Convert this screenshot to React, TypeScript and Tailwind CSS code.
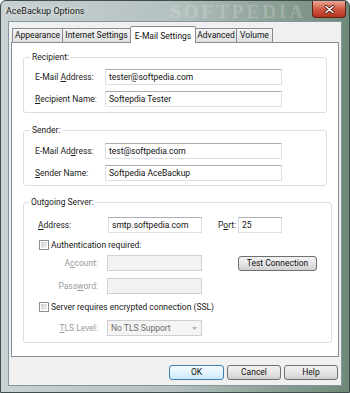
import React from 'react';

const font = "font-['Segoe_UI','Roboto',sans-serif]";

function Tab({ label, className, active }: { label: string; className: string; active?: boolean }) {
  if (active) {
    return (
      <div
        className={`relative z-10 -mb-px h-[17px] flex items-start justify-center pt-[3px] bg-white border border-b-0 border-[#898c95] rounded-t-[2px] text-[#111] ${className}`}
      >
        {label}
      </div>
    );
  }
  return (
    <div
      className={`h-[14px] flex items-center justify-center bg-gradient-to-b from-[#f4f4f4] to-[#e1e1e1] border-t border-[#898c95] text-[#111] ${className}`}
    >
      {label}
    </div>
  );
}

function TextBox({ value, className, disabled }: { value?: string; className: string; disabled?: boolean }) {
  return (
    <div
      className={
        disabled
          ? `h-[16px] border border-[#d2d2d2] bg-[#f2f2f2] ${className}`
          : `h-[16px] flex items-center pl-[3px] border border-[#dbdfe6] border-t-[#abadb3] bg-white text-[#111] ${className}`
      }
    >
      {value}
    </div>
  );
}

function CheckBox() {
  return (
    <div className="w-[10px] h-[10px] border border-[#8f8f8f] bg-white p-px">
      <div className="w-full h-full bg-gradient-to-br from-[#cfcfcf] to-[#f4f4f4]" />
    </div>
  );
}

function Button({ children, className, primary }: { children: React.ReactNode; className: string; primary?: boolean }) {
  return (
    <div
      className={
        primary
          ? `h-[15px] flex items-center justify-center rounded-[3px] border border-[#3c7fb1] bg-gradient-to-b from-[#f3fafe] via-[#e3f3fc] to-[#c9e8fa] text-[#111] ${className}`
          : `h-[15px] flex items-center justify-center rounded-[3px] border border-[#707070] bg-gradient-to-b from-[#f2f2f2] via-[#e6e6e6] to-[#d0d0d0] text-[#111] ${className}`
      }
    >
      {children}
    </div>
  );
}

function Row({ label, value }: { label: React.ReactNode; value: string }) {
  return (
    <div className="flex items-center h-[16px]">
      <div className="w-[70px] text-[#1a1a1a]">{label}</div>
      <TextBox value={value} className="w-[177px]" />
    </div>
  );
}

function Group({
  title,
  className,
  legendClass,
  children,
}: {
  title: string;
  className: string;
  legendClass: string;
  children: React.ReactNode;
}) {
  return (
    <fieldset className={`border border-[#d5dfe5] rounded-[3px] ${className}`}>
      <legend className={`px-[2px] h-[12px] leading-[12px] text-[#1a1a1a] ${legendClass}`}>{title}</legend>
      {children}
    </fieldset>
  );
}

export default function App() {
  return (
    <div
      className={`w-[350px] h-[393px] flex flex-col overflow-hidden rounded-t-[6px] border border-[#3f4d4c] bg-gradient-to-r from-[#c9d1d2] via-[#b4c1bf] to-[#6f8878] text-[8.5px] ${font}`}
    >
      {/* title bar */}
      <div className="h-[20px] flex items-start">
        <div className="pl-[5px] pt-[4px] text-[9px] text-[#1b1b1b] [text-shadow:0_0_5px_#fff]">AceBackup Options</div>
        <div className="ml-auto mr-[6px] pt-px text-[19px] leading-[19px] font-bold tracking-[3px] text-[#ffffff]/20 font-['Liberation_Serif',serif]">
          SOFTPEDIA
        </div>
        <div className="mr-[3px] w-[34px] h-[17px] flex items-center justify-center rounded-b-[4px] border border-t-0 border-[#5b231a] bg-gradient-to-b from-[#eaa796] via-[#cf5a43] to-[#b7301b]">
          <svg width="11" height="9" viewBox="0 0 11 9">
            <path d="M2 1.5 L9 7.5 M9 1.5 L2 7.5" stroke="#4a1a12" strokeWidth="3" strokeLinecap="round" />
            <path d="M2 1.5 L9 7.5 M9 1.5 L2 7.5" stroke="#fff" strokeWidth="1.6" strokeLinecap="round" />
          </svg>
        </div>
      </div>

      {/* client area */}
      <div className="mx-[7px] mb-[6px] flex-1 flex flex-col border border-[#8795a0] bg-[#f0f0f0] pt-[4px] px-[2px] pb-[5px]">
        <div className="h-[16px] flex items-end">
          <Tab label="Appearance" className="ml-px w-[51px] border-l border-r" />
          <Tab label="Internet Settings" className="w-[67px]" />
          <Tab label="E-Mail Settings" className="w-[66px]" active />
          <Tab label="Advanced" className="w-[41px] border-r" />
          <Tab label="Volume" className="w-[36px] border-r" />
        </div>

        <div className="h-[315px] border border-[#898c95] bg-white px-[11px] pt-[8px]">
          <Group title="Recipient:" legendClass="-ml-[5px]" className="px-[11px] pt-[6px] pb-[5px]">
            <div className="flex flex-col gap-[6px]">
              <Row label={<>E-Mail <u>A</u>ddress:</>} value="tester@softpedia.com" />
              <Row label={<><u>R</u>ecipient Name:</>} value="Softepdia Tester" />
            </div>
          </Group>

          <Group title="Sender:" legendClass="-ml-[5px]" className="mt-[11px] px-[11px] pt-[7px] pb-[4px]">
            <div className="flex flex-col gap-[6px]">
              <Row label={<>E-Mail Ad<u>d</u>ress:</>} value="test@softpedia.com" />
              <Row label={<><u>S</u>ender Name:</>} value="Softpedia AceBackup" />
            </div>
          </Group>

          <Group title="Outgoing Server:" legendClass="-ml-[9px]" className="mt-[10px] px-[14px] pt-[9px] pb-[6px]">
            <div className="flex items-center h-[16px]">
              <div className="w-[70px] text-[#1a1a1a]"><u>A</u>ddress:</div>
              <TextBox value="smtp.softpedia.com" className="w-[94px]" />
              <div className="ml-[16px] w-[20px] text-[#1a1a1a]">P<u>o</u>rt:</div>
              <TextBox value="25" className="w-[44px]" />
            </div>

            <div className="mt-[6px] h-[12px] flex items-center pl-px gap-[2px]">
              <CheckBox />
              <span className="text-[#1a1a1a]">Authentication required:</span>
            </div>

            <div className="mt-[4px] h-[16px] flex items-center">
              <div className="w-[60px] text-right text-[#9a9a9a]">A<u>c</u>count:</div>
              <TextBox disabled className="ml-[9px] w-[95px]" />
              <Button className="ml-[36px] w-[79px]">Test Connection</Button>
            </div>

            <div className="mt-[7px] h-[16px] flex items-center">
              <div className="w-[60px] text-right text-[#9a9a9a]">Pass<u>w</u>ord:</div>
              <TextBox disabled className="ml-[9px] w-[95px]" />
            </div>

            <div className="mt-[7px] h-[12px] flex items-center pl-px gap-[2px]">
              <CheckBox />
              <span className="text-[#1a1a1a]">Server requires encrypted connection (SSL)</span>
            </div>

            <div className="mt-[7px] h-[16px] flex items-center">
              <div className="w-[60px] text-right text-[#9a9a9a]"><u>T</u>LS Level:</div>
              <div className="ml-[9px] w-[95px] h-[16px] flex items-center justify-between pl-[3px] pr-[4px] border border-[#cfcfcf] bg-[#f4f4f4] text-[#6d6d6d]">
                <span>No TLS Support</span>
                <svg width="5" height="3" viewBox="0 0 5 3">
                  <path d="M0 0 L5 0 L2.5 3 Z" fill="#b5b5b5" />
                </svg>
              </div>
            </div>
          </Group>
        </div>

        <div className="mt-[8px] flex justify-end gap-[3px] pr-px">
          <Button primary className="w-[55px]">OK</Button>
          <Button className="w-[54px]">Cancel</Button>
          <Button className="w-[54px]">Help</Button>
        </div>
      </div>
    </div>
  );
}
